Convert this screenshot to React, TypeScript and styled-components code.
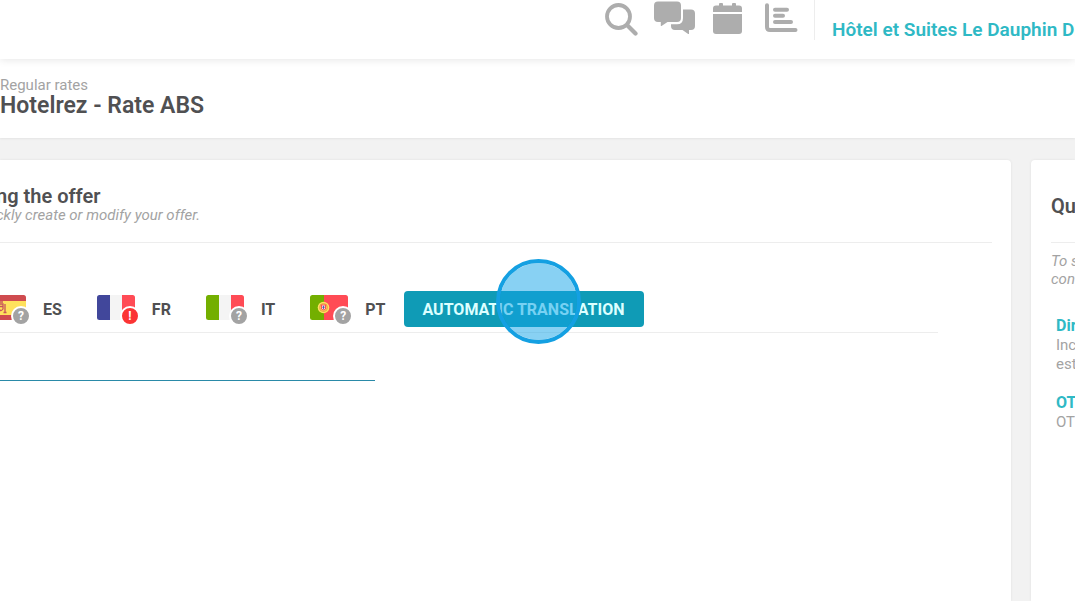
import React from "react";
import styled, { createGlobalStyle } from "styled-components";

const GlobalStyle = createGlobalStyle`
  *, *::before, *::after { box-sizing: border-box; }
  html, body, #root { height: 100%; }
  body {
    margin: 0;
    background: #f2f2f2;
    color: #505052;
    font-family: Roboto, "Liberation Sans", sans-serif;
  }
  h1, h2, h3, p { margin: 0; }
  button { font-family: inherit; cursor: pointer; }
`;

const Page = styled.div`
  display: flex;
  flex-direction: column;
  min-height: 100%;
  overflow: hidden;
`;

const TopBar = styled.header`
  position: relative;
  display: flex;
  justify-content: flex-end;
  height: 59px;
  background: #fff;
  box-shadow: 0 1px 8px rgba(0, 0, 0, 0.1);
`;

const Tools = styled.nav`
  display: flex;
  align-items: flex-start;
  height: 40px;
  padding-right: 16px;
  border-right: 1px solid #ededed;
`;

const ToolButton = styled.button<{ $gap?: number }>`
  display: block;
  margin: 0 0 0 ${(p) => p.$gap ?? 0}px;
  padding: 0;
  border: 0;
  background: none;
  color: #adadad;

  svg { display: block; }
`;

const HotelLink = styled.a`
  width: 260px;
  padding: 18px 0 0 17px;
  overflow: hidden;
  color: #2fb9c5;
  font-size: 19px;
  font-weight: 600;
  line-height: 24px;
  text-decoration: none;
  white-space: nowrap;
`;

const TitleBar = styled.section`
  height: 79px;
  padding-top: 17px;
  background: #fff;
  box-shadow: 0 1px 2px rgba(0, 0, 0, 0.06);
`;

const Crumb = styled.p`
  color: #a3a3a3;
  font-size: 15px;
  line-height: 18px;
`;

const PageTitle = styled.h1`
  font-size: 23px;
  font-weight: 600;
  line-height: 23px;
`;

const Content = styled.main`
  display: flex;
  flex: 1;
  gap: 20px;
  padding-top: 22px;
`;

const OfferCard = styled.section`
  flex: 1;
  min-width: 0;
  padding: 26px 19px 0 0;
  border-top-right-radius: 4px;
  background: #fff;
  box-shadow: 0 0 3px rgba(0, 0, 0, 0.08);
`;

const CardHead = styled.div`
  height: 57px;
  margin-left: -4px;
  border-bottom: 1px solid #ededed;
`;

const CardTitle = styled.h2`
  font-size: 20px;
  font-weight: 600;
  line-height: 20px;
  white-space: nowrap;
`;

const Hint = styled.p`
  color: #a3a3a3;
  font-size: 15px;
  font-style: italic;
  line-height: 18px;
  white-space: nowrap;
`;

const LanguageBar = styled.div`
  display: flex;
  align-items: center;
  height: 90px;
  margin-right: 54px;
  padding-top: 42px;
  border-bottom: 1px solid #ededed;
`;

const Languages = styled.div`
  display: flex;
  gap: 35px;
  margin: 0 18px 0 -12px;
`;

const Language = styled.button`
  display: flex;
  align-items: center;
  gap: 17px;
  padding: 0;
  border: 0;
  background: none;
  color: #505052;
  font-size: 16px;
  font-weight: 700;
  line-height: 28px;
`;

const LanguageCode = styled.span`
  padding-top: 2px;
`;

const FlagBox = styled.span`
  position: relative;
  display: block;
  width: 38px;
  height: 30px;

  svg { display: block; }
`;

const Badge = styled.span<{ $alert?: boolean }>`
  position: absolute;
  top: 12px;
  left: 23px;
  width: 20px;
  height: 20px;
  border: 2px solid #fff;
  border-radius: 50%;
  background: ${(p) => (p.$alert ? "#fb3434" : "#a3a3a3")};
  color: #fff;
  font-size: 12px;
  font-weight: 700;
  line-height: 16px;
  text-align: center;
`;

const TranslateButton = styled.button`
  position: relative;
  width: 240px;
  height: 36px;
  padding: 2px 0 0;
  border: 0;
  border-radius: 4px;
  background: #0f9bb6;
  color: #dcffff;
  font-size: 16px;
  font-weight: 700;
  line-height: 34px;
  white-space: nowrap;
`;

const ClickMarker = styled.span`
  position: absolute;
  top: -32px;
  left: 92px;
  width: 85px;
  height: 85px;
  border: 4px solid #14a0e2;
  border-radius: 50%;
  background: rgba(17, 163, 232, 0.5);
  background-clip: padding-box;
`;

const NameInput = styled.input`
  display: block;
  width: 375px;
  height: 48px;
  padding: 0;
  border: 0;
  border-bottom: 1px solid #2a8aa8;
  outline: 0;
  background: none;
  font: 16px Roboto, sans-serif;
`;

const HelpCard = styled.aside`
  flex: 0 0 44px;
  padding: 36px 0 0 20px;
  overflow: hidden;
  border-top-left-radius: 4px;
  background: #fff;
  box-shadow: 0 0 3px rgba(0, 0, 0, 0.08);
  white-space: nowrap;
`;

const HelpHead = styled.div`
  height: 47px;
  margin-bottom: 9px;
  border-bottom: 1px solid #ededed;
`;

const HelpList = styled.div`
  display: flex;
  flex-direction: column;
  gap: 19px;
  padding: 28px 0 0 5px;
`;

const HelpItem = styled.section`
  color: #a3a3a3;
  font-size: 15px;
  line-height: 19px;
`;

const HelpTitle = styled.h3`
  color: #2fb9c5;
  font-size: 16px;
  font-weight: 700;
  line-height: 20px;
`;

type Code = "es" | "fr" | "it" | "pt";

const stripes: Record<Code, [string, number, number, number, number][]> = {
  es: [["#cf4b4f", 0, 0, 38, 26], ["#ffe15c", 0, 6, 38, 14]],
  fr: [["#41479b", 0, 0, 13, 26], ["#f4f4f4", 13, 0, 12, 26], ["#ff4b55", 25, 0, 13, 26]],
  it: [["#73af00", 0, 0, 13, 26], ["#f4f4f4", 13, 0, 12, 26], ["#ff4b55", 25, 0, 13, 26]],
  pt: [["#73af00", 0, 0, 14, 26], ["#ff4b55", 14, 0, 24, 26]],
};

function Flag({ code }: { code: Code }) {
  return (
    <svg width="38" height="30" viewBox="0 0 38 30" aria-hidden="true">
      <clipPath id={`flag-${code}`}>
        <rect y="1" width="38" height="25" rx="2.5" />
      </clipPath>
      <g clipPath={`url(#flag-${code})`}>
        {stripes[code].map(([fill, x, y, w, h]) => (
          <rect key={x + fill} fill={fill} x={x} y={y + 1} width={w} height={h} />
        ))}
        {code === "es" && (
          <g fill="none" stroke="#c8555a" strokeWidth="1.3">
            <path d="M9 10v8M17 10v8M11 10h4v5q-2 3-4 0zM11 8h4M8 18.500h3M15.500 18.500h3M11 12.500h4" />
          </g>
        )}
        {code === "pt" && (
          <g>
            <circle cx="13.500" cy="13.500" r="5.800" fill="#ffe15c" />
            <circle cx="13.500" cy="13.500" r="4" fill="none" stroke="#e8a04a" />
            <path d="M10.800 10.600h5.400v4q-2.700 4-5.400 0z" fill="#ff4b55" />
            <path d="M12 11.600h3v3q-1.500 2-3 0z" fill="#f4f4f4" />
            <path d="M13.500 11.800v3.400M12.200 13.200h2.600" stroke="#41479b" strokeWidth=".8" />
          </g>
        )}
      </g>
    </svg>
  );
}

const languages: { code: Code; alert?: boolean }[] = [
  { code: "es" },
  { code: "fr", alert: true },
  { code: "it" },
  { code: "pt" },
];

export default function App() {
  return (
    <Page>
      <GlobalStyle />
      <TopBar>
        <Tools aria-label="Tools">
          <ToolButton aria-label="Search">
            <svg width="33" height="37" viewBox="0 0 33 37" fill="none" stroke="currentColor">
              <circle cx="13.500" cy="16.500" r="11.500" strokeWidth="3.800" />
              <path d="M22.500 25.500l8 8" strokeWidth="4.200" strokeLinecap="round" />
            </svg>
          </ToolButton>
          <ToolButton aria-label="Messages" $gap={16}>
            <svg width="41" height="37" viewBox="0 0 41 37" fill="currentColor">
              <path d="M4 1.500H23Q27 1.500 27 5.500V18Q27 22 23 22H13.500L7.500 26Q6.800 26.300 6.800 25.500V22H4Q0 22 0 18V5.500Q0 1.500 4 1.500Z" />
              <path d="M29 9.500H37Q41 9.500 41 13.500V26Q41 30 37 30H35V33.500Q35 34.400 34.200 34L28.500 30H21Q17 30 17 26V24.300H23Q29 24.300 29 18Z" />
            </svg>
          </ToolButton>
          <ToolButton aria-label="Calendar" $gap={18}>
            <svg width="29" height="37" viewBox="0 0 29 37" fill="currentColor">
              <path d="M3 5.500H6V4Q6 3 7 3H9Q10 3 10 4V5.500H19V4Q19 3 20 3H22Q23 3 23 4V5.500H26Q29 5.500 29 8.500V12H0V8.500Q0 5.500 3 5.500Z" />
              <path d="M0 14H29V31Q29 34 26 34H3Q0 34 0 31Z" />
            </svg>
          </ToolButton>
          <ToolButton aria-label="Reports" $gap={23}>
            <svg width="33" height="37" viewBox="0 0 33 37" fill="none" stroke="currentColor" strokeWidth="4" strokeLinecap="round">
              <path d="M2 5.300V27Q2 30 5 30H30.500M10 9.700H22M10 15.700H18M10 21.900H26" />
            </svg>
          </ToolButton>
        </Tools>
        <HotelLink href="#">Hôtel et Suites Le Dauphin Dr</HotelLink>
      </TopBar>

      <TitleBar>
        <Crumb>Regular rates</Crumb>
        <PageTitle>Hotelrez - Rate ABS</PageTitle>
      </TitleBar>

      <Content>
        <OfferCard>
          <CardHead>
            <CardTitle>ng the offer</CardTitle>
            <Hint>ckly create or modify your offer.</Hint>
          </CardHead>
          <LanguageBar>
            <Languages>
              {languages.map(({ code, alert }) => (
                <Language key={code}>
                  <FlagBox>
                    <Flag code={code} />
                    <Badge $alert={alert}>{alert ? "!" : "?"}</Badge>
                  </FlagBox>
                  <LanguageCode>{code.toUpperCase()}</LanguageCode>
                </Language>
              ))}
            </Languages>
            <TranslateButton>
              AUTOMATIC TRANSLATION
              <ClickMarker />
            </TranslateButton>
          </LanguageBar>
          <NameInput aria-label="Offer name" />
        </OfferCard>

        <HelpCard>
          <HelpHead>
            <CardTitle>Qu</CardTitle>
          </HelpHead>
          <Hint>To s</Hint>
          <Hint>con</Hint>
          <HelpList>
            <HelpItem>
              <HelpTitle>Dir</HelpTitle>
              <p>Inc</p>
              <p>est</p>
            </HelpItem>
            <HelpItem>
              <HelpTitle>OT</HelpTitle>
              <p>OT</p>
            </HelpItem>
          </HelpList>
        </HelpCard>
      </Content>
    </Page>
  );
}
